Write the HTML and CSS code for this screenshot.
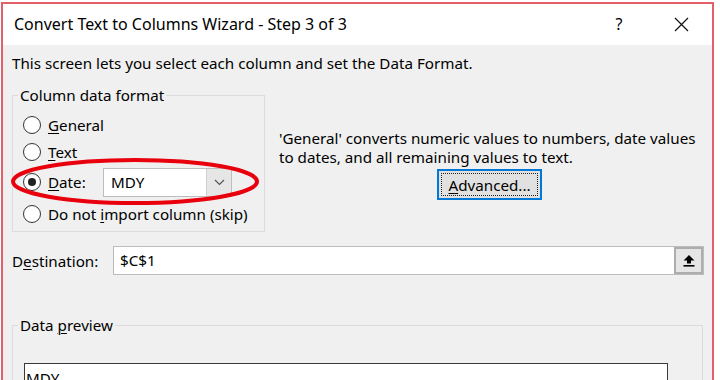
FILE: index.html
```html
<!DOCTYPE html>
<html lang="en">
<head>
<meta charset="UTF-8">
<title>Convert Text to Columns Wizard - Step 3 of 3</title>
<link rel="stylesheet" href="styles.css">
</head>
<body>
<div class="window">
    <div class="titlebar">
        <span class="title">Convert Text to Columns Wizard - Step 3 of 3</span>
        <div class="caption-buttons">
            <span class="cap-btn help">?</span>
            <span class="cap-btn close">
                <svg width="15" height="15" viewBox="0 0 15 15"><path d="M1 1 L14 14 M14 1 L1 14" stroke="#111" stroke-width="1.2" fill="none"/></svg>
            </span>
        </div>
    </div>

    <div class="content">
        <p class="intro">This screen lets you select each column and set the Data Format.</p>

        <div class="format-row">
            <fieldset class="group format-group">
                <legend>Column data format</legend>
                <div class="radio-row"><span class="radio"></span><span><u>G</u>eneral</span></div>
                <div class="radio-row"><span class="radio"></span><span><u>T</u>ext</span></div>
                <div class="radio-row date-row">
                    <span class="radio checked"></span>
                    <span class="date-label"><u>D</u>ate:</span>
                    <div class="combo">
                        <span class="combo-value">MDY</span>
                        <span class="combo-btn">
                            <svg width="11" height="7" viewBox="0 0 11 7"><path d="M1 1 L5.5 5.5 L10 1" stroke="#555" stroke-width="1.2" fill="none"/></svg>
                        </span>
                    </div>
                    <!-- red marker drawn over the row -->
                    <svg class="marker" width="250" height="48" viewBox="0 0 250 48">
                        <ellipse cx="124" cy="23.5" rx="122" ry="21.5" stroke="#e8000c" stroke-width="4" fill="none"/>
                    </svg>
                </div>
                <div class="radio-row"><span class="radio"></span><span>Do not <u>i</u>mport column (skip)</span></div>
            </fieldset>

            <div class="desc">
                <p>'General' converts numeric values to numbers, date values<br>to dates, and all remaining values to text.</p>
                <button class="btn-advanced"><span class="focus-rect"><u>A</u>dvanced...</span></button>
            </div>
        </div>

        <div class="dest-row">
            <span class="dest-label">D<u>e</u>stination:</span>
            <div class="dest-input">
                <span class="dest-value">$C$1</span>
                <span class="collapse-btn">
                    <svg width="12" height="13" viewBox="0 0 12 13"><path d="M6 1 L11.5 6.5 H8 V9.5 H4 V6.5 H0.5 Z" fill="#000"/><rect x="0.5" y="11" width="11" height="1.6" fill="#000"/></svg>
                </span>
            </div>
        </div>

        <fieldset class="group preview-group">
            <legend>Data <u>p</u>review</legend>
            <div class="preview-box">
                <div class="preview-cell">MDY</div>
            </div>
        </fieldset>
    </div>
</div>
</body>
</html>
```

FILE: styles.css
```css
html, body {
    margin: 0;
    padding: 0;
}
body {
    background-color: #fff;
    font-family: "Noto Sans", "Open Sans", sans-serif;
    font-size: 15.2px;
    color: #000;
}
u {
    text-decoration-thickness: 1px;
    text-underline-offset: 2px;
}
.window {
    margin: 2px 6px 0 1px;
    height: 378px;
    border: 2px solid #e3606b;
    border-bottom: none;
    box-sizing: border-box;
    overflow: hidden;
    background-color: #f0f0f0;
}
.titlebar {
    height: 40px;
    background-color: #fff;
    display: flex;
    align-items: center;
    justify-content: space-between;
    padding-left: 11px;
    padding-bottom: 1px;
}
.title {
    font-size: 16px;
    line-height: 20px;
}
.caption-buttons {
    display: flex;
    height: 100%;
}
.cap-btn {
    width: 62px;
    display: flex;
    align-items: center;
    justify-content: center;
}
.help {
    font-size: 16px;
}
.content {
    padding: 9px 8px 0 9px;
}
.intro {
    margin: 0;
    line-height: 19px;
}
.format-row {
    display: flex;
    margin-top: 13px;
}
.group {
    margin: 0;
    border: 1px solid #dcdcdc;
    box-sizing: border-box;
}
.group legend {
    padding: 0 2px;
    line-height: 19px;
}
.format-group {
    width: 253px;
    flex-shrink: 0;
    padding: 6px 8px 4px 10px;
}
.format-group legend {
    margin-left: -5px;
}
.radio-row {
    display: flex;
    align-items: center;
    gap: 7px;
    height: 27px;
    white-space: nowrap;
}
.radio {
    width: 18px;
    height: 18px;
    border: 1.5px solid #333;
    border-radius: 50%;
    background-color: #fff;
    box-sizing: border-box;
    flex-shrink: 0;
    display: flex;
    align-items: center;
    justify-content: center;
}
.radio.checked::after {
    content: "";
    width: 8px;
    height: 8px;
    border-radius: 50%;
    background-color: #222;
}
.date-row {
    position: relative;
    height: 30px;
    margin: 2px 0 3px;
}
.date-label {
    width: 48px;
    flex-shrink: 0;
}
.combo {
    width: 129px;
    height: 29px;
    border: 1px solid #bdbdbd;
    background-color: #fff;
    box-sizing: border-box;
    display: flex;
    flex-shrink: 0;
}
.combo-value {
    flex: 1;
    padding-left: 7px;
    line-height: 27px;
}
.combo-btn {
    width: 24px;
    background-color: #e6e6e6;
    border-left: 1px solid #cfcfcf;
    display: flex;
    align-items: center;
    justify-content: center;
}
.marker {
    position: absolute;
    left: -12px;
    top: -9px;
    pointer-events: none;
}
.desc {
    margin-left: 14px;
    padding-top: 43px;
    white-space: nowrap;
}
.desc p {
    margin: 0;
    line-height: 19px;
}
.btn-advanced {
    margin: 2px 0 0 158px;
    width: 105px;
    height: 31px;
    padding: 2px;
    border: 2px solid #0078d7;
    background-color: #e1e1e1;
    font: inherit;
    color: #000;
    box-sizing: border-box;
    display: flex;
}
.focus-rect {
    flex: 1;
    border: 1px dotted #222;
    display: flex;
    align-items: center;
    justify-content: center;
}
.dest-row {
    display: flex;
    align-items: center;
    margin-top: 14px;
    height: 29px;
}
.dest-label {
    width: 101px;
    flex-shrink: 0;
}
.dest-input {
    flex: 1;
    height: 29px;
    border: 1px solid #bcbcbc;
    background-color: #fff;
    box-sizing: border-box;
    display: flex;
}
.dest-value {
    flex: 1;
    padding-left: 6px;
    line-height: 27px;
}
.collapse-btn {
    width: 29px;
    background-color: #e5e5e5;
    border: 2px solid #adadad;
    box-sizing: border-box;
    display: flex;
    align-items: center;
    justify-content: center;
}
.preview-group {
    margin: 41px 1px 0 0;
    padding: 28px 34px 0 11px;
    height: 80px;
}
.preview-group legend {
    margin-left: -6px;
}
.preview-box {
    border: 1px solid #3a3a3a;
    background-color: #fff;
    height: 40px;
}
.preview-cell {
    line-height: 24px;
    padding-left: 1px;
    margin-top: 2px;
}
```
